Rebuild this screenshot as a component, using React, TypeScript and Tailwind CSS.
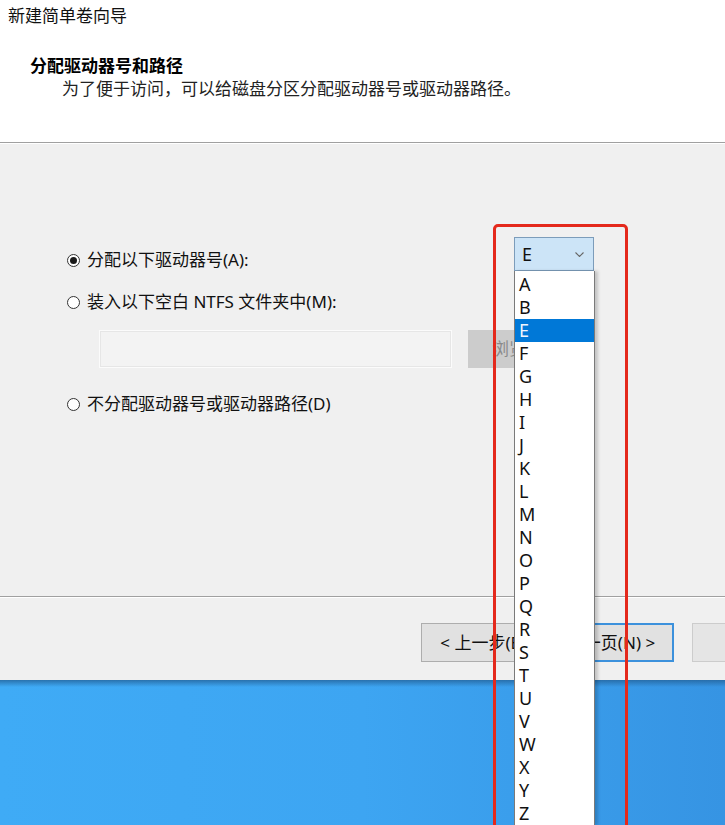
import React from 'react';

const LETTERS = ['A', 'B', 'E', 'F', 'G', 'H', 'I', 'J', 'K', 'L', 'M', 'N', 'O', 'P', 'Q', 'R', 'S', 'T', 'U', 'V', 'W', 'X', 'Y', 'Z'];

function Radio({ checked }: { checked?: boolean }) {
  return (
    <span className="w-[13px] h-[13px] rounded-full border border-[#333] bg-white flex items-center justify-center flex-shrink-0">
      {checked && <span className="w-[7px] h-[7px] rounded-full bg-[#1a1a1a]" />}
    </span>
  );
}

export default function App() {
  return (
    <div
      className="relative w-[725px] h-[825px] overflow-hidden bg-[#f0f0f0] text-[17px] text-[#111]"
      style={{ fontFamily: '"Noto Sans", "Noto Sans CJK SC", sans-serif' }}
    >
      {/* header */}
      <div className="h-[143px] bg-white border-b border-[#a0a0a0]">
        <div className="pl-[8px] pt-[4px] leading-[24px]">新建简单卷向导</div>
        <div className="pl-[30px] pt-[26px] leading-[24px] font-bold text-black">分配驱动器号和路径</div>
        <div className="pl-[62px] leading-[22px] text-[#222]">为了便于访问，可以给磁盘分区分配驱动器号或驱动器路径。</div>
      </div>

      {/* body */}
      <div className="h-[454px] border-t border-white border-b border-b-[#a0a0a0] pt-[93px] pl-[67px]">
        <div className="flex h-[34px]">
          <div className="w-[447px] flex items-center gap-[7px] h-[24px] mt-[11px]">
            <Radio checked />
            <span className="leading-[24px]">分配以下驱动器号(A):</span>
          </div>
          <div className="relative w-[80px]">
            <div className="h-[34px] bg-[#cce4f7] border border-[#7c9cba] flex items-center justify-between pl-[7px] pr-[9px] text-[18px]">
              <span className="leading-none">E</span>
              <svg width="9" height="5" viewBox="0 0 9 5" fill="none" stroke="#666" strokeWidth="1.1">
                <path d="M0.5 0.5 L4.5 4.5 L8.5 0.5" />
              </svg>
            </div>
            <div className="absolute left-0 top-[34px] w-[81px] bg-white border-l border-r border-[#7a7a7a] shadow-[3px_0_3px_rgba(0,0,0,0.18)] pt-[2px] z-10 text-[18px]">
              {LETTERS.map(l => (
                <div
                  key={l}
                  className={
                    l === 'E'
                      ? 'h-[23px] leading-[23px] pl-[4px] bg-[#0078d7] text-[#eef5fd]'
                      : 'h-[23px] leading-[23px] pl-[4px] text-[#111]'
                  }
                >
                  {l}
                </div>
              ))}
            </div>
          </div>
        </div>

        <div className="flex items-center gap-[7px] h-[24px] mt-[19px]">
          <Radio />
          <span className="leading-[24px]">装入以下空白 NTFS 文件夹中(M):</span>
        </div>

        <div className="flex mt-[16px] ml-[32px]">
          <div className="w-[353px] h-[38px] bg-[#f3f3f3] border border-[#fbfbfb] shadow-[inset_0_0_0_1px_#e6e6e6]" />
          <div className="ml-[16px] w-[94px] h-[38px] bg-[#cccccc] text-[#8a8a8a] flex items-center pl-[24px]">浏览</div>
        </div>

        <div className="flex items-center gap-[7px] h-[24px] mt-[24px]">
          <Radio />
          <span className="leading-[24px]">不分配驱动器号或驱动器路径(D)</span>
        </div>
      </div>

      {/* footer */}
      <div className="h-[83px] border-t border-white flex items-start pt-[25px] pl-[421px]">
        <div className="flex gap-[2px]">
          <button className="w-[125px] h-[39px] bg-[#e1e1e1] border border-[#adadad] flex items-center justify-center">
            &lt; 上一步(B)
          </button>
          <button className="w-[126px] h-[39px] bg-[#e1e1e1] border-2 border-[#3c91dc] flex items-center justify-center">
            下一页(N) &gt;
          </button>
        </div>
        <button className="ml-[18px] w-[125px] h-[39px] bg-[#e5e5e5] border border-[#cccccc] flex-shrink-0" />
      </div>

      {/* desktop */}
      <div className="relative h-[145px] bg-gradient-to-r from-[#3fabf6] via-[#3da5f2] to-[#3694e3]">
        <div className="h-[7px] bg-gradient-to-b from-[#24649c] to-transparent opacity-80" />
      </div>

      {/* red annotation box */}
      <div className="absolute left-[493px] top-[224px] w-[135px] h-[640px] border-[3px] border-[#e4291c] rounded-[5px] z-20 pointer-events-none" />
    </div>
  );
}
